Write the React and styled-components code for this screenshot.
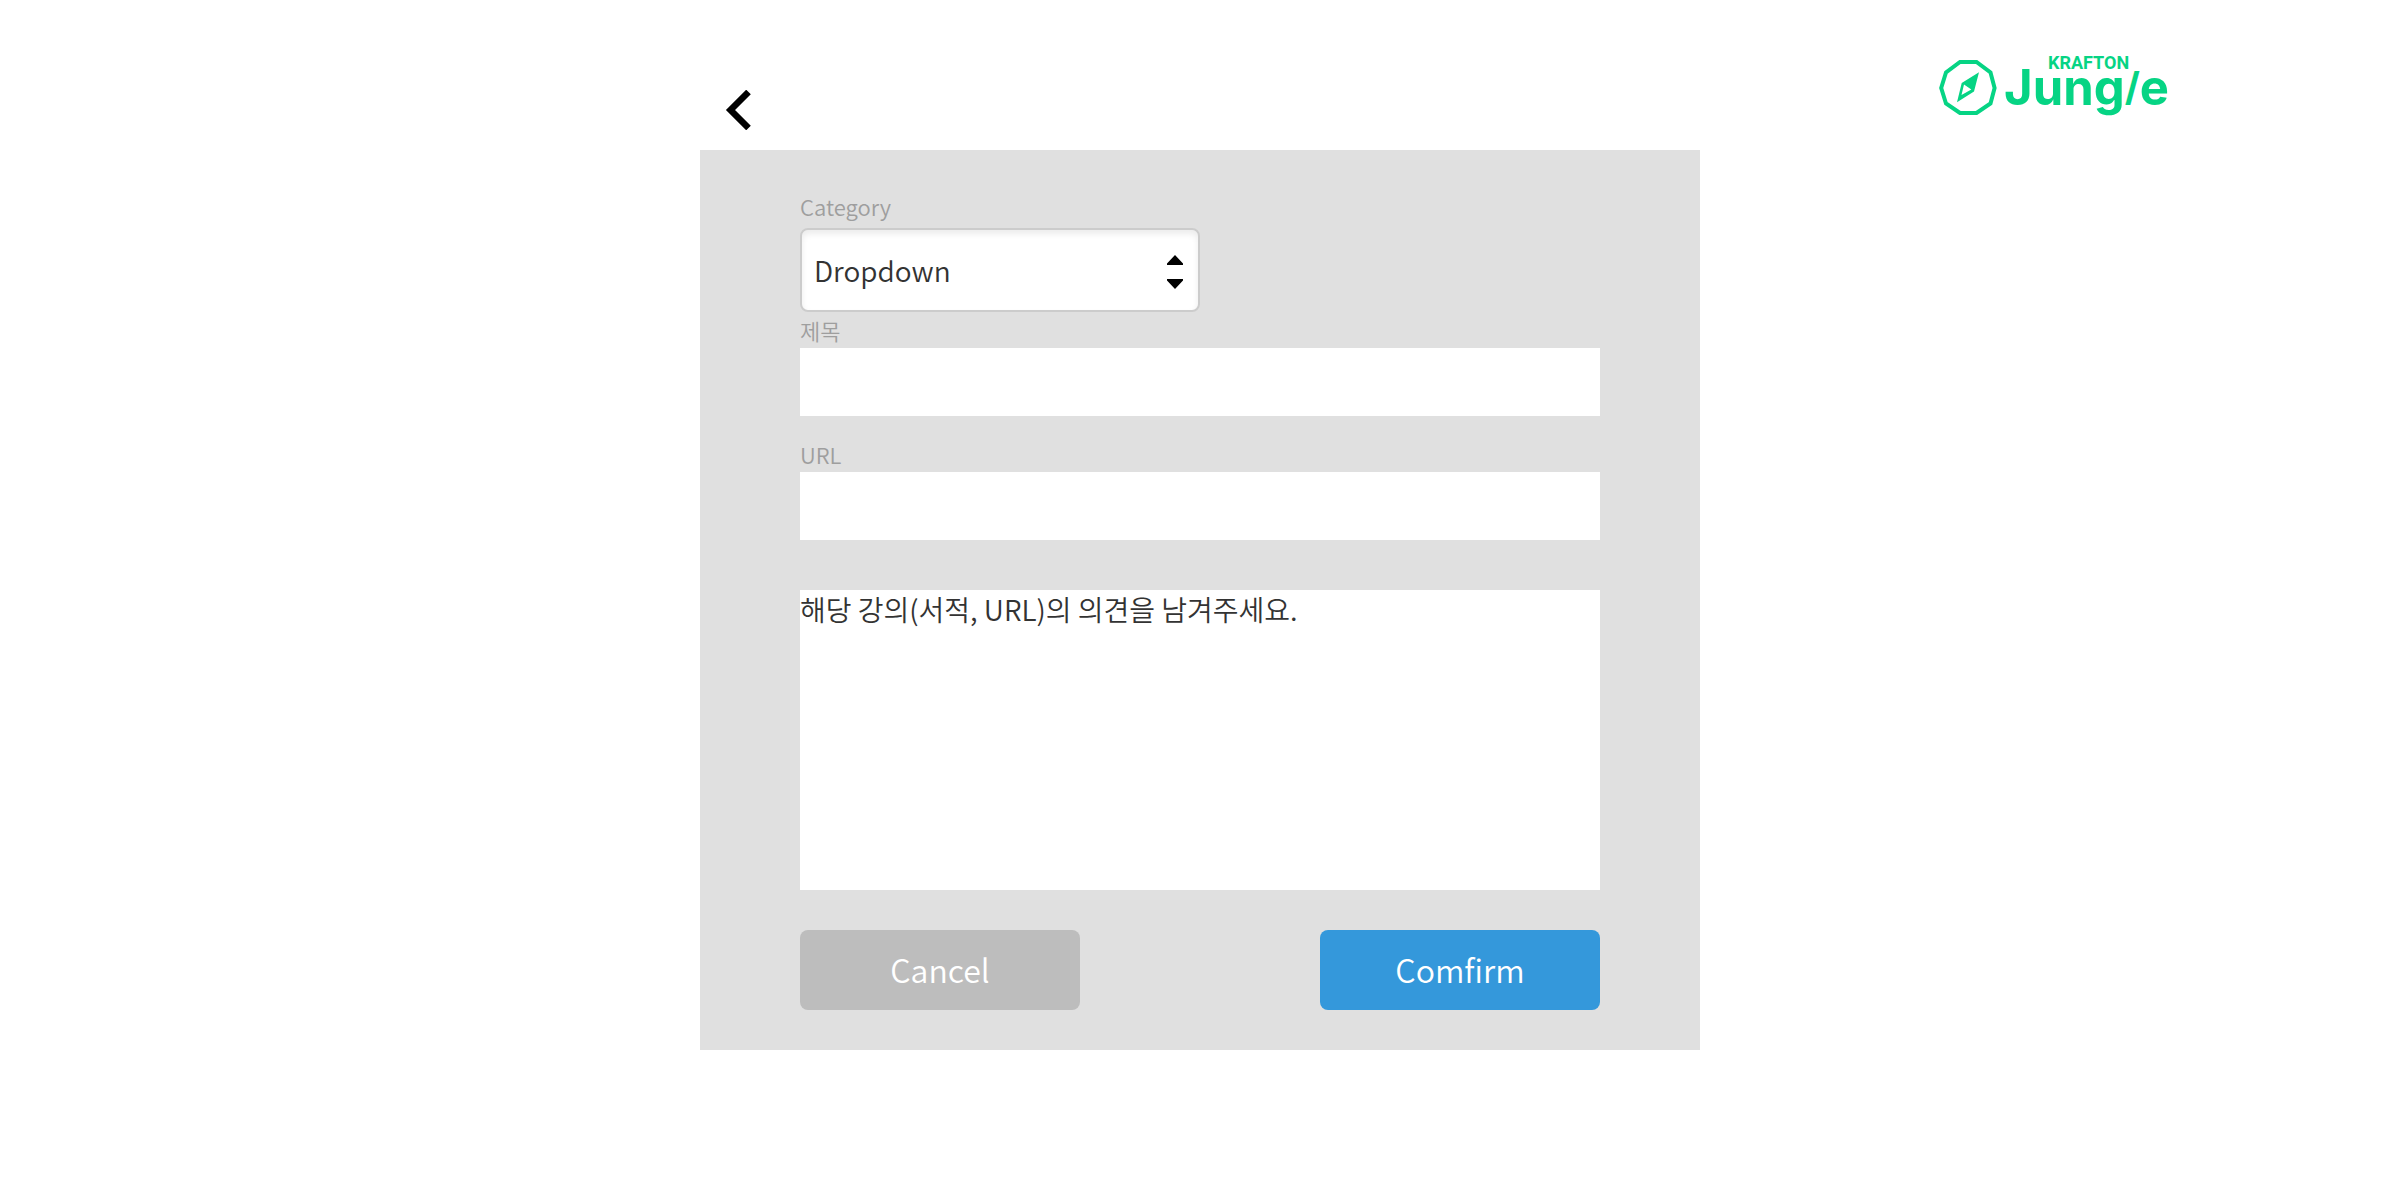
import React from "react";
import styled, { createGlobalStyle } from "styled-components";

const GlobalStyle = createGlobalStyle`
  *, *::before, *::after { box-sizing: border-box; }
  body {
    margin: 0;
    background: #fff;
    color: #333;
    font-family: "Noto Sans CJK KR", sans-serif;
    font-weight: 350;
  }
  button, input, select, textarea { font: inherit; color: inherit; }
`;

const Header = styled.header`
  display: grid;
  grid-template-columns: 1fr minmax(0, 1000px) 1fr;
  height: 150px;
`;

const HeaderStart = styled.div`
  grid-column: 2;
  padding: 90px 24px 0;
`;

const BackButton = styled.button`
  display: block;
  padding: 0;
  border: 0;
  background: none;
  cursor: pointer;
  svg { display: block; }
`;

const LogoLink = styled.a`
  justify-self: center;
  padding: 50px 0 0 18px;
  svg { display: block; }
`;

const Panel = styled.form`
  display: flex;
  flex-direction: column;
  max-width: 1000px;
  margin: 0 auto;
  padding: 38px 100px 40px;
  background: #e0e0e0;
`;

const Field = styled.div`
  display: flex;
  flex-direction: column;
  margin-bottom: ${(p) => p.$space || 0}px;
`;

const Label = styled.label`
  font-size: 22px;
  line-height: 36px;
  color: #9e9e9e;
`;

const SelectBox = styled.div`
  position: relative;
  width: 50%;
  margin-top: 4px;
`;

const Select = styled.select`
  display: block;
  width: 100%;
  height: 84px;
  padding: 0 60px 0 12px;
  border: 2px solid #ccc;
  border-radius: 8px;
  background: #fff;
  box-shadow: inset 0 4px 6px rgba(0, 0, 0, 0.08);
  font-size: 28px;
  appearance: none;
`;

const Arrows = styled.svg`
  position: absolute;
  top: 27px;
  right: 17px;
  pointer-events: none;
`;

const TextInput = styled.input`
  width: 100%;
  height: 68px;
  padding: 0 12px;
  border: 0;
  background: #fff;
  font-size: 28px;
`;

const Opinion = styled.textarea`
  display: block;
  width: 100%;
  height: 300px;
  padding: 0;
  border: 0;
  background: #fff;
  font-size: 28px;
  line-height: 38px;
  resize: none;
  &::placeholder { color: #333; opacity: 1; }
`;

const Actions = styled.div`
  display: flex;
  justify-content: space-between;
  margin-top: 40px;
`;

const ActionButton = styled.button`
  width: 280px;
  height: 80px;
  padding: 0 0 2px;
  border: 0;
  border-radius: 8px;
  background: ${(p) => (p.$primary ? "#3498db" : "#bdbdbd")};
  color: #fff;
  font-size: 32px;
  cursor: pointer;
`;

function Logo() {
  return (
    <svg width="240" height="84" viewBox="0 0 240 84" fill="#06d484">
      <polygon
        points="21,12 37.5,12 51.5,22.5 55.6,38 51.5,53.5 37.5,63 21,63 7,53.5 2.2,38 7,22.5"
        fill="none"
        stroke="#06d484"
        strokeWidth="4"
      />
      <path
        fillRule="evenodd"
        d="M40 22.3 L35 41.5 L18 52.3 L22.7 33 Z M25 34.5 L22.5 45 L32.3 39.5 Z"
      />
      <text x="109" y="19" fontFamily="Roboto, sans-serif" fontWeight="700" fontSize="18">
        KRAFTON
      </text>
      <text x="65" y="55" fontFamily="Inter, sans-serif" fontWeight="700" fontSize="49">
        Jung<tspan fontSize="39" dy="-4">/</tspan><tspan dy="4">e</tspan>
      </text>
    </svg>
  );
}

export default function App() {
  return (
    <>
      <GlobalStyle />
      <Header>
        <HeaderStart>
          <BackButton type="button" aria-label="Back">
            <svg width="32" height="40" viewBox="0 0 32 40">
              <path d="M24.500 2 L6.500 20 L24.500 38" fill="none" stroke="#000" strokeWidth="6.5" />
            </svg>
          </BackButton>
        </HeaderStart>
        <LogoLink href="#" aria-label="Krafton Jungle">
          <Logo />
        </LogoLink>
      </Header>
      <main>
        <Panel onSubmit={(e) => e.preventDefault()}>
          <Field>
            <Label htmlFor="category">Category</Label>
            <SelectBox>
              <Select id="category">
                <option>Dropdown</option>
              </Select>
              <Arrows width="16" height="34" viewBox="0 0 16 34">
                <path d="M8 0 L16 8.5 V10 H0 V8.5 Z M0 24 H16 V25.500 L8 34 L0 25.500 Z" />
              </Arrows>
            </SelectBox>
          </Field>
          <Field $space={20}>
            <Label htmlFor="title">제목</Label>
            <TextInput id="title" type="text" />
          </Field>
          <Field $space={50}>
            <Label htmlFor="url">URL</Label>
            <TextInput id="url" type="text" />
          </Field>
          <Opinion aria-label="의견" placeholder="해당 강의(서적, URL)의 의견을 남겨주세요." />
          <Actions>
            <ActionButton type="button">Cancel</ActionButton>
            <ActionButton type="submit" $primary>Comfirm</ActionButton>
          </Actions>
        </Panel>
      </main>
    </>
  );
}
